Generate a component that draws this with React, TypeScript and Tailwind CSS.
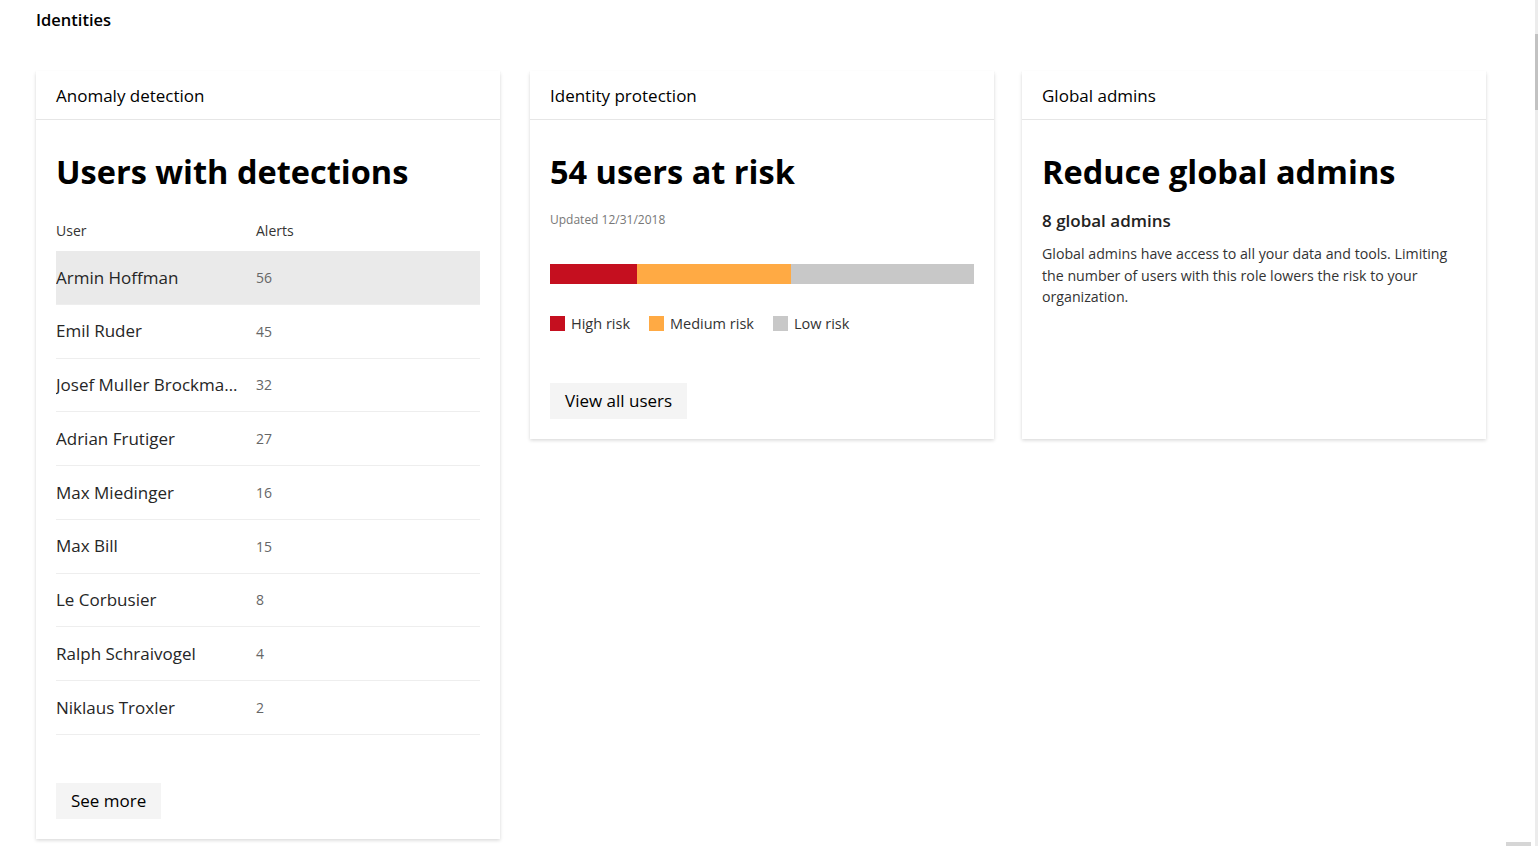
import React from 'react';

// ===================================
// Identities dashboard
// ===================================

const FONT = "font-['Open_Sans',_'Noto_Sans',_sans-serif]";

const users = [
  { name: 'Armin Hoffman', alerts: 56 },
  { name: 'Emil Ruder', alerts: 45 },
  { name: 'Josef Muller Brockmann', alerts: 32 },
  { name: 'Adrian Frutiger', alerts: 27 },
  { name: 'Max Miedinger', alerts: 16 },
  { name: 'Max Bill', alerts: 15 },
  { name: 'Le Corbusier', alerts: 8 },
  { name: 'Ralph Schraivogel', alerts: 4 },
  { name: 'Niklaus Troxler', alerts: 2 },
];

function Card({ title, children }: { title: string; children: React.ReactNode }) {
  return (
    <section className="w-[464px] bg-white flex flex-col shadow-[0_1.6px_3.6px_rgba(0,0,0,0.16),0_0.3px_0.9px_rgba(0,0,0,0.12)]">
      {/* Header */}
      <header className="h-[49px] flex items-center px-5 pt-px border-b border-[#e6e6e6]">
        <h2 className="text-[17px] text-black">{title}</h2>
      </header>
      <div className="flex-1 flex flex-col px-5 pt-[28px] pb-5">{children}</div>
    </section>
  );
}

function Button({ children }: { children: React.ReactNode }) {
  return (
    <button className="self-start h-9 px-[15px] bg-[#f4f4f4] text-[17px] text-black">{children}</button>
  );
}

function Legend({ color, label }: { color: string; label: string }) {
  return (
    <span className="flex items-center gap-[6px]">
      <span className={`w-[15px] h-[15px] ${color}`} />
      {label}
    </span>
  );
}

export default function App() {
  return (
    <div className={`${FONT} min-h-screen bg-white text-[#333] relative overflow-hidden`}>
      <div className="px-9 pt-[8px]">
        <h1 className="text-[16.5px] font-semibold text-black leading-6">Identities</h1>
      </div>

      <div className="flex items-start gap-[30px] pl-9 pt-[39px]">
        {/* Anomaly detection */}
        <Card title="Anomaly detection">
          <h3 className="text-[32.5px] font-bold text-black leading-[48px]">Users with detections</h3>
          <div className="mt-[23px] text-[14px] text-[#333] flex h-[22px] items-center">
            <span className="w-[200px]">User</span>
            <span>Alerts</span>
          </div>
          <ul className="mt-[10px]">
            {users.map((u, i) => (
              <li
                key={u.name}
                className={`h-[53.75px] flex items-center border-b border-[#eeeeee] ${i === 0 ? 'bg-[#eaeaea]' : ''}`}
              >
                <span className="w-[200px] pr-[18px] truncate text-[17px] font-medium text-[#262626]">{u.name}</span>
                <span className="text-[14px] text-[#666]">{u.alerts}</span>
              </li>
            ))}
          </ul>
          <div className="mt-[48px]">
            <Button>See more</Button>
          </div>
        </Card>

        <div className="flex items-stretch gap-[28px]">
          {/* Identity protection */}
          <Card title="Identity protection">
            <h3 className="text-[32.5px] font-bold text-black leading-[48px]">54 users at risk</h3>
            <p className="mt-[16px] text-[12px] text-[#777] leading-4">Updated 12/31/2018</p>
            <div className="mt-[36px] h-5 flex">
              <div className="w-[87px] bg-[#c50f1f]" />
              <div className="w-[154px] bg-[#ffaa44]" />
              <div className="flex-1 bg-[#c8c8c8]" />
            </div>
            <div className="mt-[29px] flex items-center gap-[19px] text-[14.5px] text-[#333]">
              <Legend color="bg-[#c50f1f]" label="High risk" />
              <Legend color="bg-[#ffaa44]" label="Medium risk" />
              <Legend color="bg-[#c8c8c8]" label="Low risk" />
            </div>
            <div className="mt-[48px]">
              <Button>View all users</Button>
            </div>
          </Card>

          {/* Global admins */}
          <Card title="Global admins">
            <h3 className="text-[32.5px] font-bold text-black leading-[48px]">Reduce global admins</h3>
            <p className="mt-[13px] text-[17px] font-semibold text-[#222] leading-6">8 global admins</p>
            <p className="mt-[10px] text-[14.2px] text-[#333] leading-[21.5px] pr-4">
              Global admins have access to all your data and tools. Limiting the number of users with this role lowers
              the risk to your organization.
            </p>
          </Card>
        </div>
      </div>

      {/* scrollbar remnants */}
      <div className="absolute top-0 right-0 w-[3px] h-full bg-[#ececec]">
        <div className="mt-[34px] h-[76px] bg-[#c2c2c2]" />
      </div>
      <div className="absolute bottom-0 right-[7px] w-[25px] h-[4px] bg-[#d6d6d6]" />
    </div>
  );
}
